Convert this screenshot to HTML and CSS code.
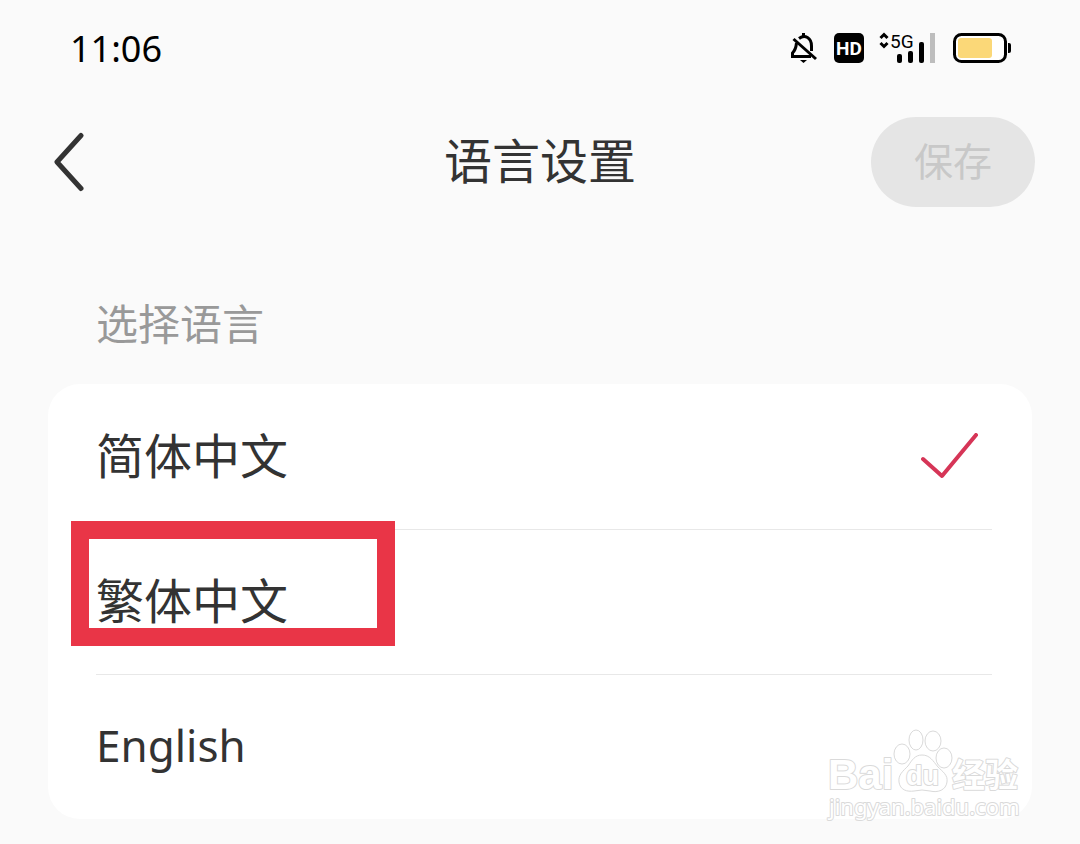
FILE: index.html
```html
<!DOCTYPE html>
<html lang="zh-CN">
<head>
    <meta charset="UTF-8">
    <meta name="viewport" content="width=device-width, initial-scale=1.0">
    <title>语言设置</title>
    <link rel="stylesheet" href="styles.css">
</head>
<body>

<div class="status-bar">
    <span class="time">11:06</span>
    <div class="status-icons">
        <svg class="icon-bell" width="28" height="32" viewBox="0 0 28 32" fill="none" stroke="#000" stroke-width="3">
            <path d="M8 6.500C14 2 20.500 6 20.500 14V19"/>
            <path d="M5.500 11C5 16 4.500 18 1.500 21V24.500H20"/>
            <path d="M2.500 7L25 27"/>
            <path d="M12.500 1V5"/>
            <path d="M9 28H16L12.500 31Z" fill="#000" stroke="none"/>
        </svg>
        <svg class="icon-hd" width="30" height="30" viewBox="0 0 30 30">
            <rect width="30" height="30" rx="5" fill="#000"/>
            <text class="hd-text" x="15" y="22" text-anchor="middle">HD</text>
        </svg>
        <svg class="icon-signal" width="59" height="32" viewBox="0 0 59 32">
            <path d="M1.500 6L5 2.500L8.500 6M1.500 11L5 14.500L8.500 11" fill="none" stroke="#000" stroke-width="3"/>
            <text class="signal-text" x="11" y="16">5G</text>
            <rect x="18" y="22" width="5" height="9" rx="2"/>
            <rect x="29" y="19" width="5" height="12" rx="2"/>
            <rect x="40" y="10" width="5" height="21" rx="2"/>
            <rect x="51" y="1" width="5" height="30" fill="#bdbdbd"/>
        </svg>
        <svg class="icon-battery" width="59" height="30" viewBox="0 0 59 30">
            <rect x="1.500" y="1.500" width="51" height="27" rx="7" fill="#fff" stroke="#000" stroke-width="3"/>
            <rect x="5" y="5" width="34" height="20" rx="3" fill="#fbd878"/>
            <path d="M55 10H56Q58 10 58 12V18Q58 20 56 20H55Z"/>
        </svg>
    </div>
</div>

<header class="header">
    <a class="back" href="#" aria-label="返回">
        <svg width="32" height="60" viewBox="0 0 32 60" fill="none" stroke="#333" stroke-width="5" stroke-linecap="round" stroke-linejoin="round">
            <path d="M27 3.500L3 30L27 56.500"/>
        </svg>
    </a>
    <h1 class="title">语言设置</h1>
    <button class="save" type="button" disabled>保存</button>
</header>

<form class="languages">
    <h2 class="section-title">选择语言</h2>
    <div class="card">
        <label class="option">
            <input type="radio" name="language" value="zh-CN" checked>
            <span class="option-name">简体中文</span>
            <svg class="check" width="60" height="48" viewBox="0 0 60 48" fill="none" stroke="#d63557" stroke-width="4" stroke-linecap="round" stroke-linejoin="round">
                <path d="M3 26L22 43L56 2"/>
            </svg>
        </label>
        <label class="option highlighted">
            <input type="radio" name="language" value="zh-TW">
            <span class="option-name">繁体中文</span>
            <svg class="check" width="60" height="48" viewBox="0 0 60 48" fill="none" stroke="#d63557" stroke-width="4" stroke-linecap="round" stroke-linejoin="round">
                <path d="M3 26L22 43L56 2"/>
            </svg>
        </label>
        <label class="option">
            <input type="radio" name="language" value="en">
            <span class="option-name latin">English</span>
            <svg class="check" width="60" height="48" viewBox="0 0 60 48" fill="none" stroke="#d63557" stroke-width="4" stroke-linecap="round" stroke-linejoin="round">
                <path d="M3 26L22 43L56 2"/>
            </svg>
        </label>

        <svg class="watermark" width="200" height="96" viewBox="0 0 200 96">
            <g class="paw">
                <ellipse cx="78" cy="27" rx="8" ry="10"/>
                <ellipse cx="92" cy="13" rx="7" ry="10"/>
                <ellipse cx="109" cy="14" rx="8" ry="10"/>
                <ellipse cx="120" cy="31" rx="8" ry="10"/>
                <path d="M98 28C91 28 88 33 84 39C79 44 74 48 75 55C76 63 83 65 90 64Q98 62 106 64C114 66 122 63 123 55C124 48 119 45 114 40C109 34 106 28 98 28Z"/>
            </g>
            <text class="mark-brand" x="4" y="62">Bai</text>
            <text class="mark-du" x="82" y="58">du</text>
            <text class="mark-cn" x="128" y="60">经验</text>
            <text class="mark-url" x="5" y="88">jingyan.baidu.com</text>
        </svg>
    </div>
</form>

</body>
</html>
```
FILE: styles.css
```css
*, *::before {
    box-sizing: border-box;
}
body {
    font-family: "Noto Sans CJK SC", sans-serif;
    margin: 0;
    background: #fafafa;
    color: #333;
}
svg {
    display: block;
}

/* status bar */
.status-bar {
    display: flex;
    justify-content: space-between;
    align-items: center;
    height: 96px;
    padding: 0 68px 0 70px;
    color: #000;
}
.time {
    font-family: "Noto Sans", sans-serif;
    font-size: 36px;
}
.status-icons {
    display: flex;
    align-items: center;
    gap: 15px;
}
.hd-text {
    font-family: Roboto, sans-serif;
    font-size: 19px;
    font-weight: 700;
    fill: #fff;
}
.signal-text {
    font-family: Roboto, sans-serif;
    font-size: 19px;
}

/* header */
.header {
    display: grid;
    grid-template-columns: 1fr auto 1fr;
    align-items: center;
    height: 132px;
    padding: 0 45px;
}
.back {
    justify-self: start;
    padding-left: 9px;
}
.title {
    margin: 0;
    padding-bottom: 8px;
    font-size: 48px;
    font-weight: 400;
    line-height: 72px;
}
.save {
    justify-self: end;
    padding: 12px 43px 18px;
    border: none;
    border-radius: 45px;
    background: #e5e5e5;
    color: #c8c8c8;
    font-family: inherit;
    font-size: 39px;
    line-height: 60px;
}

/* language list */
.languages {
    padding: 62px 48px 26px;
}
.section-title {
    margin: 0;
    padding: 0 48px 30px;
    color: #999;
    font-size: 42px;
    font-weight: 400;
    line-height: 64px;
}
.card {
    position: relative;
    padding: 0 40px 0 48px;
    border-radius: 32px;
    background: #fff;
}
.option {
    position: relative;
    display: flex;
    align-items: center;
    justify-content: space-between;
    height: 145px;
    padding-right: 12px;
    cursor: pointer;
}
.option + .option {
    border-top: 1px solid #e8e8e8;
}
.option input {
    position: absolute;
    opacity: 0;
}
.option-name {
    position: relative;
    padding-bottom: 8px;
    font-size: 48px;
    line-height: 72px;
}
.latin {
    padding-bottom: 4px;
    font-family: "Noto Sans", sans-serif;
    font-size: 44px;
}
.check {
    visibility: hidden;
}
.option input:checked ~ .check {
    visibility: visible;
}
/* red frame round the option */
.highlighted::before {
    content: "";
    position: absolute;
    top: -9px;
    left: -25px;
    width: 324px;
    height: 125px;
    border: 18px solid #e93547;
}

/* watermark */
.watermark {
    position: absolute;
    right: 8px;
    bottom: -4px;
    pointer-events: none;
}
.paw {
    fill: #fff;
    stroke: #dadada;
    stroke-width: 1;
}
.watermark text {
    fill: #fff;
    stroke: #dadada;
    stroke-width: 2;
    stroke-linejoin: round;
    paint-order: stroke;
}
.mark-brand {
    font-family: "Liberation Sans", sans-serif;
    font-size: 42px;
    font-weight: 700;
}
.mark-du {
    font-family: "Liberation Sans", sans-serif;
    font-size: 27px;
    font-weight: 700;
}
.mark-cn {
    font-size: 33px;
    font-weight: 700;
}
.mark-url {
    font-family: "Noto Sans", sans-serif;
    font-size: 22px;
}
```
